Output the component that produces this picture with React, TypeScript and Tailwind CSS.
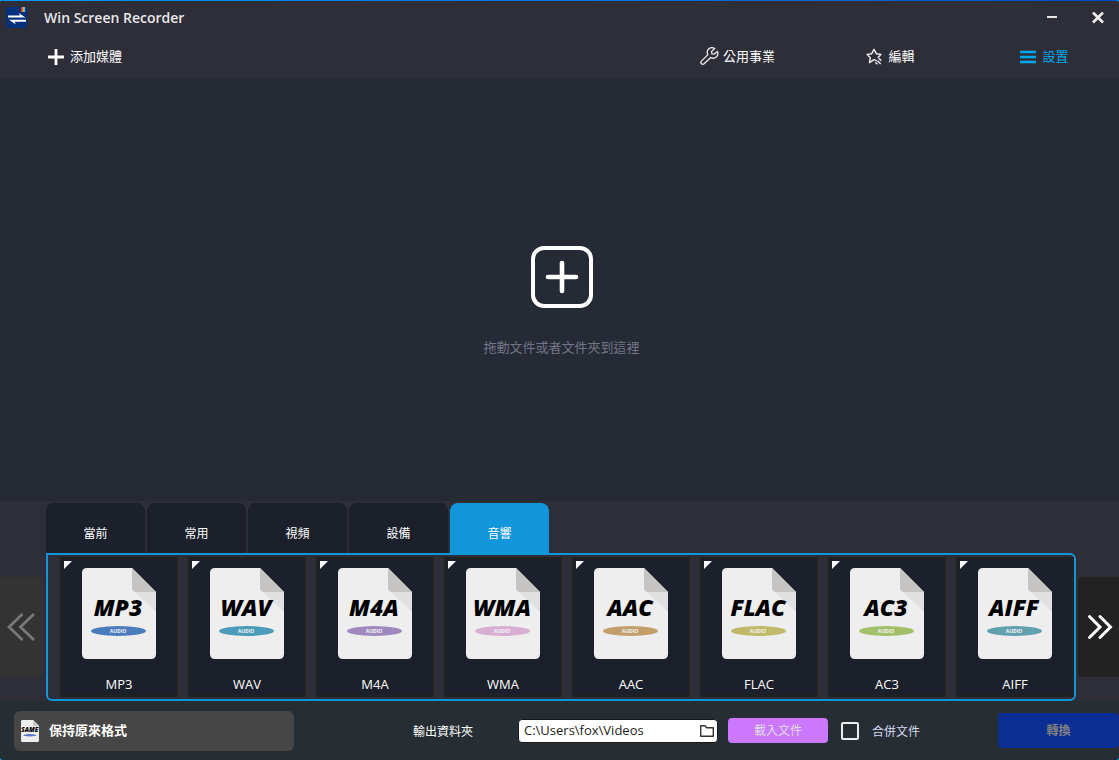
import { useState } from "react";

const tabs = ["當前", "常用", "視頻", "設備", "音響"];

const formats = [
  { name: "MP3", color: "#4a7bbd" },
  { name: "WAV", color: "#4a9cb9" },
  { name: "M4A", color: "#9f89bd" },
  { name: "WMA", color: "#d8aed3" },
  { name: "AAC", color: "#c29e6b" },
  { name: "FLAC", color: "#bfb968" },
  { name: "AC3", color: "#a3c069" },
  { name: "AIFF", color: "#62a0ad" },
];

function FileIcon({ name, color, caption, size = 23, className }: { name: string; color: string; caption?: string; size?: number; className: string }) {
  return (
    <svg viewBox="0 0 74 91" className={className} aria-hidden="true">
      <path d="M5 0H50L74 24V86Q74 91 69 91H5Q0 91 0 86V5Q0 0 5 0Z" fill="#eeeeee" />
      <path d="M53 24H74V44Z" fill="#e0e0e0" />
      <path d="M50 0L74 24H54Q50 24 50 20Z" fill="#c7c5c4" />
      <text x="36" y="48" textAnchor="middle" fontSize={size} className="font-extrabold italic" fill="#000">
        {name}
      </text>
      <ellipse cx="36.500" cy="63" rx="27.500" ry="5" fill={color} />
      {caption && (
        <text x="36" y="65" textAnchor="middle" fontSize="5" className="font-bold" fill="#f4f4f4">
          {caption}
        </text>
      )}
    </svg>
  );
}

function AppLogo() {
  return (
    <svg viewBox="0 0 22 22" className="size-[22px]" aria-hidden="true">
      <rect x="0" y="0" width="21" height="21" rx="2.500" fill="#05307c" />
      <rect x="15" y="0" width="1.500" height="5" fill="#d8402f" />
      <rect x="16.500" y="0" width="1.500" height="5" fill="#f5b32d" />
      <rect x="18" y="0" width="1.200" height="5" fill="#4fb8e8" />
      <path d="M2 10.500V8.500H14L12.500 6L19.500 10.500Z" fill="#fff" />
      <path d="M20 12.700V14.700H8.500L10 17.500L3 12.700Z" fill="#fff" />
    </svg>
  );
}

function PlusIcon() {
  return (
    <svg viewBox="0 0 16 16" className="size-4" stroke="#fff" strokeWidth="2.800" aria-hidden="true">
      <path d="M8 0V16M0 8H16" />
    </svg>
  );
}

function WrenchIcon() {
  return (
    <svg viewBox="0 0 20 20" className="size-[19px]" fill="none" stroke="#e8e8e8" strokeWidth="1.400" strokeLinejoin="round" strokeLinecap="round" aria-hidden="true">
      <path d="M15.500 1.700A4.900 4.900 0 0 0 8.300 8L1.500 14.900A1.900 1.900 0 0 0 4.300 17.700L11.300 11A4.900 4.900 0 0 0 18.300 4.700L14.900 7.500L12.500 7.300L12.200 4.700Z" />
    </svg>
  );
}

function StarIcon() {
  return (
    <svg viewBox="0 0 18 18" className="size-[18px]" fill="none" stroke="#e8e8e8" strokeWidth="1.500" strokeLinejoin="round" aria-hidden="true">
      <path d="M10.700 12.900L8 11.600L3.500 14.600L4.300 9.700L1.200 6.400L5.700 5.700L8 1.300L10.300 5.700L14.900 6.400L11.800 9.700" />
      <path d="M12.600 10.300L15.300 12.600M11.500 12.700L14.700 16M9.500 14.300L11.300 16.300" />
    </svg>
  );
}

function MenuIcon() {
  return (
    <svg viewBox="0 0 16 14" className="h-3.5 w-4" stroke="#00a8f0" strokeWidth="2.400" aria-hidden="true">
      <path d="M0 2H16M0 7H16M0 12H16" />
    </svg>
  );
}

export default function App() {
  const [tab, setTab] = useState(4);
  const [merge, setMerge] = useState(false);
  const [folder, setFolder] = useState("C:\\Users\\fox\\Videos");

  return (
    <div className="min-h-screen bg-[#00a0e8] font-['Open_Sans','Noto_Sans_CJK_TC',sans-serif] text-white">
      <div className="flex min-h-screen flex-col overflow-hidden rounded-sm bg-[#262a35]">
        <div className="h-0.5 border-b border-[#2e2e38] bg-linear-to-r from-[#009cf0] to-[#0050c0]" />
        <header className="bg-[#2e2e38]">
          <div className="flex h-8 items-center pl-1.5">
            <AppLogo />
            <h1 className="ml-4 text-sm font-semibold text-[#e8e8e8]">Win Screen Recorder</h1>
            <div className="ml-auto flex items-center gap-[22px] pr-2">
              <button aria-label="Minimize" className="flex size-[22px] items-center justify-center">
                <svg viewBox="0 0 12 12" className="size-3" stroke="#e6e6e6" strokeWidth="2"><path d="M1 5H11" /></svg>
              </button>
              <button aria-label="Close" className="flex size-[26px] items-center justify-center">
                <svg viewBox="0 0 12 12" className="size-3" stroke="#f0f0f0" strokeWidth="2.600"><path d="M1 0.500L11 10.500M11 0.500L1 10.500" /></svg>
              </button>
            </div>
          </div>
          <nav className="flex h-[45px] items-center justify-between pl-12 text-[13px]">
            <button className="flex items-center gap-1.5"><PlusIcon />添加媒體</button>
            <div className="grid grid-cols-3">
              <button className="flex w-[153px] items-center justify-center gap-1 pl-0.5"><WrenchIcon />公用事業</button>
              <button className="flex w-[153px] items-center justify-center gap-1 pl-0.5"><StarIcon />編輯</button>
              <button className="flex w-[153px] items-center justify-center gap-1.5 pl-1 text-[#00a8f0]"><MenuIcon />設置</button>
            </div>
          </nav>
        </header>

        <main className="flex flex-1 flex-col items-center justify-center gap-[30px] pl-1 pt-6">
          <button aria-label="添加媒體" className="flex">
            <svg viewBox="0 0 62 62" className="size-[62px]" fill="none" stroke="#fff" strokeWidth="4">
              <rect x="2" y="2" width="58" height="58" rx="11" />
              <path d="M31 17V45M17 31H45" strokeWidth="4.600" strokeLinecap="round" />
            </svg>
          </button>
          <p className="text-[13px] text-[#737688]">拖動文件或者文件夾到這裡</p>
        </main>

        <section className="bg-[#2e2e38] pt-0.5">
          <div role="tablist" className="flex gap-0.5 pl-[46px] text-xs">
            {tabs.map((label, i) => (
              <button
                key={label}
                role="tab"
                aria-selected={tab === i}
                onClick={() => setTab(i)}
                className={
                  tab === i
                    ? "h-[50px] w-[99px] rounded-t-lg bg-[#1296db] pt-3"
                    : "h-[50px] w-[99px] rounded-t-lg bg-[#1c202a] pt-3"
                }
              >
                {label}
              </button>
            ))}
          </div>
          <div className="flex">
            <button aria-label="Previous formats" disabled className="mr-[3px] mt-6 flex h-[100px] w-[43px] shrink-0 items-center justify-center rounded-r bg-[#333333] pr-0.5">
              <svg viewBox="0 0 28 28" className="size-7" fill="none" stroke="#777" strokeWidth="2.800"><path d="M15.500 1L2 14L15.500 27M27 1L13.500 14L27 27" /></svg>
            </button>
            <ul className="grid min-w-0 flex-1 grid-cols-8 gap-2.5 rounded-r-md rounded-bl-md border-2 border-[#1296db] py-0.5 pl-3">
              {formats.map((f) => (
                <li key={f.name}>
                  <button className="relative flex h-[140px] w-full flex-col items-center justify-between border-2 border-[#222222] bg-[#1c202a] pb-[3px] pt-[9px] text-[13px] leading-4">
                    <svg viewBox="0 0 8 8" className="absolute left-0.5 top-0.5 size-2" fill="#fff" aria-hidden="true"><path d="M0 0H8L0 8Z" /></svg>
                    <FileIcon name={f.name} color={f.color} caption="AUDIO" className="h-[91px] w-[74px]" />
                    {f.name}
                  </button>
                </li>
              ))}
            </ul>
            <button aria-label="Next formats" className="ml-0.5 mt-6 flex h-[100px] w-[41px] shrink-0 items-center justify-center rounded-l bg-[#222222] pl-0.5">
              <svg viewBox="0 0 26 26" className="size-[26px]" fill="none" stroke="#fff" strokeWidth="3" strokeLinecap="round"><path d="M2.500 2.500L13 13L2.500 23.500M13 2.500L23.500 13L13 23.500" /></svg>
            </button>
          </div>
        </section>

        <footer className="flex h-[59px] items-center bg-[#262d33] pl-3.5 text-xs">
          <button className="flex h-10 w-[280px] items-center gap-2.5 rounded-md bg-[#464646] px-[7px] text-[13px] font-bold">
            <FileIcon name="SAME" color="#5a72c8" size={26} className="h-[22px] w-[18px]" />
            保持原來格式
          </button>
          <div className="ml-auto flex items-center">
            <label htmlFor="folder" className="mr-[45px] pt-0.5">輸出資料夾</label>
            <div className="flex h-6 w-[200px] items-center rounded border border-[#15191c] bg-white pl-[5px] pr-[3px]">
              <input id="folder" value={folder} onChange={(e) => setFolder(e.target.value)} className="min-w-0 flex-1 bg-transparent text-[13px] text-[#222222] outline-none" />
              <button aria-label="Browse">
                <svg viewBox="0 0 14 12" className="h-3 w-3.5" fill="none" stroke="#333" strokeWidth="1.400" strokeLinejoin="round"><path d="M.7 11.300V.7H5L6.600 2.700H13.300V11.300Z" /></svg>
              </button>
            </div>
            <button className="ml-2.5 h-[25px] w-[100px] rounded bg-[#cc77ff] text-[#dedede]">載入文件</button>
            <input id="merge" type="checkbox" checked={merge} onChange={(e) => setMerge(e.target.checked)} className="ml-[13px] size-[18px] appearance-none rounded-xs border-2 border-[#eeeeee] checked:bg-[#1296db]" />
            <label htmlFor="merge" className="ml-[13px] pt-0.5 text-[#d5daf0]">合併文件</label>
          </div>
          <button disabled className="ml-[78px] h-[35px] w-[121px] rounded bg-[#0b2e94] font-bold text-[#808080]">轉換</button>
        </footer>
      </div>
    </div>
  );
}
